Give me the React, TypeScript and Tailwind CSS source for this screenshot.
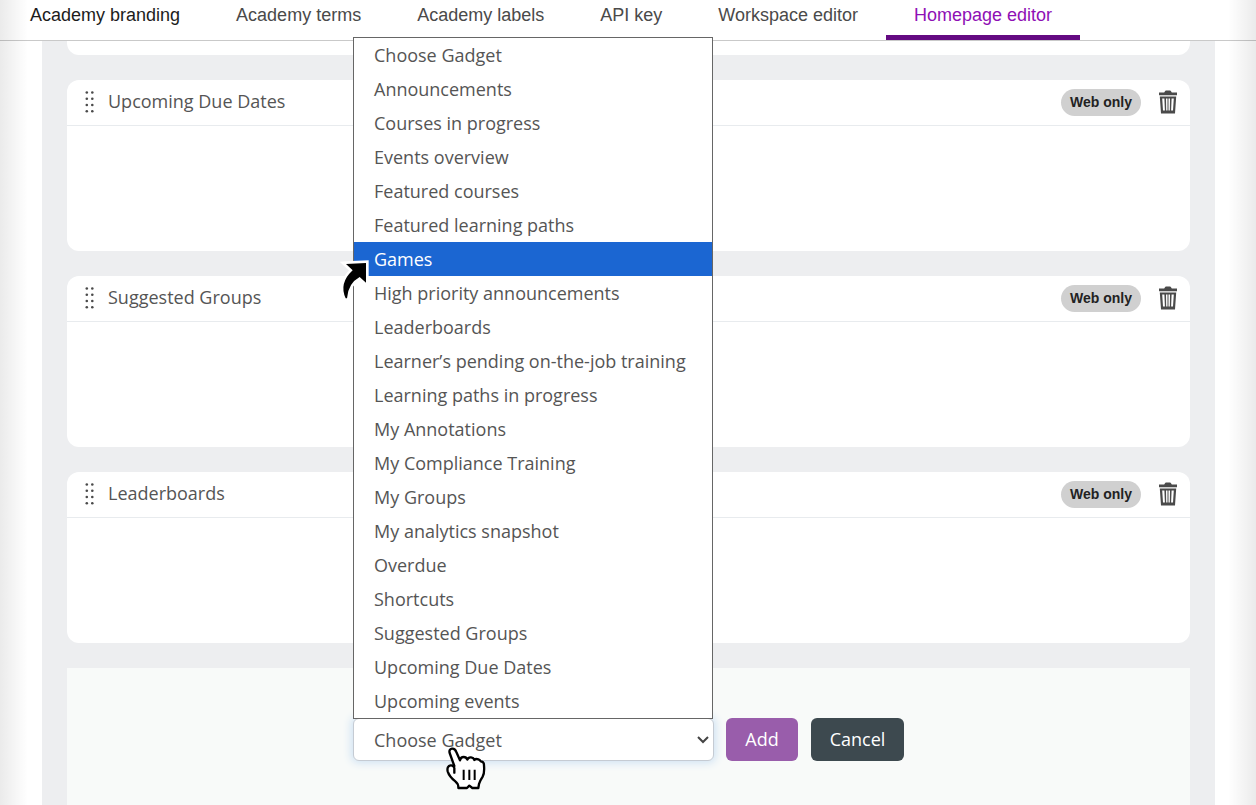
import React, { useState } from "react";

const tabs = [
  "Academy branding",
  "Academy terms",
  "Academy labels",
  "API key",
  "Workspace editor",
  "Homepage editor",
];

const gadgets = ["Upcoming Due Dates", "Suggested Groups", "Leaderboards"];

const options = [
  "Choose Gadget",
  "Announcements",
  "Courses in progress",
  "Events overview",
  "Featured courses",
  "Featured learning paths",
  "Games",
  "High priority announcements",
  "Leaderboards",
  "Learner’s pending on-the-job training",
  "Learning paths in progress",
  "My Annotations",
  "My Compliance Training",
  "My Groups",
  "My analytics snapshot",
  "Overdue",
  "Shortcuts",
  "Suggested Groups",
  "Upcoming Due Dates",
  "Upcoming events",
];

const DragHandle = () => (
  <svg width="10" height="24" viewBox="0 0 10 24" fill="#4a4a4a">
    {[1.5, 7.7, 14, 20.2].map((y) => (
      <React.Fragment key={y}>
        <circle cx="1.8" cy={y} r="1.3" />
        <circle cx="7.3" cy={y} r="1.3" />
      </React.Fragment>
    ))}
  </svg>
);

const TrashIcon = () => (
  <svg width="20" height="24" viewBox="0 0 20 24" fill="#4a4a4a">
    <path d="M1 2.6h5.2L7 1.2Q7.3.6 8 .6h4q.7 0 1 .6l.8 1.4H19v2.6H1z" />
    <path
      fillRule="evenodd"
      d="M1.8 6.6h16.4L17 23.4H3zM4.2 8.6l.8 12h1.9l-.5-12zM8 8.6l.2 12h1.3v-12zM10.5 8.6v12h1.3l.2-12zM13.6 8.6l-.5 12h1.9l.8-12z"
    />
  </svg>
);

const ArrowMark = () => (
  <svg width="40" height="50" viewBox="0 0 120 150">
    <path
      d="M30 30 90 27V86L71 69Q36 88 33 133H29Q8 88 50 49z"
      fill="#000"
      stroke="#fff"
      strokeWidth="16"
      paintOrder="stroke"
    />
  </svg>
);

const HandPointer = () => (
  <svg width="48" height="48" viewBox="0 0 144 144">
    <path
      d="M37 66 23 27Q20 16 30 14q9-1 13 10l11 25q2-10 11-10 8 0 11 8 3-8 11-7 8 1 10 8 4-5 12-2 5 2 7 6 10 0 10 12 2 24-4 34-9 14-11 22l-2 12H91l-9-7-7 7H49q1-12-9-20Q22 98 17 82 14 66 26 64q8-1 11 8v14"
      fill="#fff"
      stroke="#000"
      strokeWidth="7"
      strokeLinejoin="round"
      strokeLinecap="round"
    />
    <path d="M65 77v31M82 77v31M98 77v31" stroke="#000" strokeWidth="6" />
  </svg>
);

const App = () => {
  const [gadget, setGadget] = useState<string>("Choose Gadget");
  const [active, setActive] = useState<string>("Games");

  return (
    <div className="relative flex min-h-screen flex-col overflow-hidden bg-white font-['Open_Sans',sans-serif] text-[#555]">
      {/* Tabs */}
      <nav className="flex h-[41px] border-b border-[#c9c9c9] pl-0.5 font-['Liberation_Sans',sans-serif] text-lg">
        {tabs.map((tab, i) => (
          <a
            key={tab}
            href="#"
            className={`h-10 shrink-0 whitespace-nowrap px-7 leading-[30px] ${
              tab === "Homepage editor"
                ? "border-b-[5px] border-[#640a82] text-[#8f0fb5]"
                : i === 0
                  ? "text-[#1c1c1c]"
                  : "text-[#4a4a4a]"
            }`}
          >
            {tab}
          </a>
        ))}
      </nav>

      {/* Gadgets */}
      <main className="ml-[42px] mr-[41px] flex flex-1 flex-col gap-[25px] bg-[#edeef0] px-[25px]">
        <div className="h-[14px] rounded-b-xl bg-white" />

        {gadgets.map((name) => (
          <section key={name} className="h-[171px] rounded-xl bg-white">
            <header className="flex h-[46px] items-center border-b border-[#e8ebee] pl-[18px] pr-3">
              <DragHandle />
              <h2 className="ml-[13px] pb-1 text-lg">{name}</h2>
              <span className="ml-auto flex h-[27px] items-center rounded-full bg-[#d0d0d0] px-[9px] pb-0.5 font-['Liberation_Sans',sans-serif] text-sm font-bold text-[#222]">
                Web only
              </span>
              <button type="button" aria-label={`Delete ${name}`} className="ml-[17px] pb-0.5">
                <TrashIcon />
              </button>
            </header>
          </section>
        ))}

        {/* Add gadget */}
        <form className="flex flex-1 items-start justify-center bg-[#f8faf9] pb-11 pt-[50px]">
          <div className="relative w-[361px]">
            <select
              aria-label="Gadget"
              value={gadget}
              onChange={(e) => setGadget(e.target.value)}
              className="h-[43px] w-full appearance-none rounded-md border border-[#c5cbd3] bg-white pl-5 pr-8 text-lg shadow-[0_0_8px_2px_#cfe2f3] outline-none"
            >
              {options.map((option) => (
                <option key={option}>{option}</option>
              ))}
            </select>
            <svg
              className="pointer-events-none absolute right-1 top-4"
              width="14"
              height="12"
              viewBox="0 0 14 12"
              fill="none"
              stroke="#444"
              strokeWidth="2"
            >
              <path d="M2 3l5 5 5-5" />
            </svg>

            <ul
              role="listbox"
              aria-label="Gadgets"
              className="absolute bottom-[42px] left-0 w-[360px] border border-[#666] bg-white text-lg leading-[34px]"
            >
              {options.map((option) => (
                <li
                  key={option}
                  role="option"
                  aria-selected={option === active}
                  onMouseEnter={() => setActive(option)}
                  className={`relative h-[34px] whitespace-nowrap pl-5 ${
                    option === active ? "z-10 bg-[#1b66d2] text-white" : ""
                  }`}
                >
                  {option === "Games" && (
                    <span className="pointer-events-none absolute -left-[18px] top-3">
                      <ArrowMark />
                    </span>
                  )}
                  <span className="relative">{option}</span>
                </li>
              ))}
            </ul>

            <span className="pointer-events-none absolute left-[89px] top-[26px]">
              <HandPointer />
            </span>
          </div>
          <button
            type="button"
            className="ml-3 h-[43px] w-[72px] rounded-md bg-[#995dab] pb-0.5 text-lg text-white"
          >
            Add
          </button>
          <button
            type="button"
            className="ml-[13px] h-[43px] w-[93px] rounded-md bg-[#3d494f] pb-0.5 text-lg text-white"
          >
            Cancel
          </button>
        </form>
      </main>

      {/* Edge shading */}
      <div className="pointer-events-none absolute inset-y-0 left-0 w-7 bg-linear-to-r from-black/8 to-transparent" />
      <div className="pointer-events-none absolute inset-y-0 right-0 w-7 bg-linear-to-l from-black/8 to-transparent" />
    </div>
  );
};

export default App;
